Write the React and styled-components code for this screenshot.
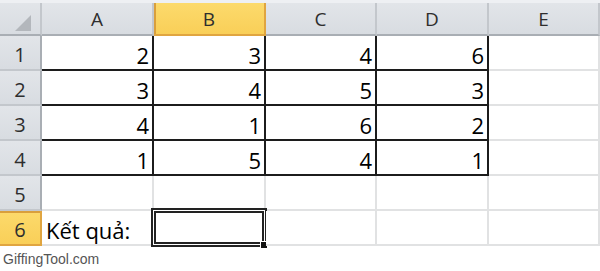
import React from "react";
import styled, { createGlobalStyle, css } from "styled-components";

const Global = createGlobalStyle`
  html, body { margin: 0; padding: 0; background: #fff; }
  body { width: 600px; height: 271px; overflow: hidden; }
`;

const Page = styled.div`
  width: 600px;
  height: 271px;
  background: #fff;
  font-family: "Open Sans", Lato, sans-serif;
`;

const TopStrip = styled.div`
  height: 3px;
  background: #eef0f3;
`;

const Sheet = styled.div`
  display: grid;
  grid-template-columns: 42px 112px 112px 111px 112px 111px;
  grid-template-rows: 33px repeat(6, 35px);
`;

const Head = styled.div`
  box-sizing: border-box;
  display: flex;
  align-items: center;
  justify-content: center;
  font-size: 19px;
  color: #2e2e2e;
  background: linear-gradient(#e2e5e9, #d8dce1);
  border-right: 2px solid #c3c7cc;
  border-bottom: 2px solid #a9aeb4;
  padding-top: 1px;
  ${p => p.$active && css`
    background: linear-gradient(#fcda6c, #f9cf58);
    border-right-color: #e0a540;
    border-bottom-color: #e0a540;
    box-shadow: inset 2px 0 0 #d99f3c;
  `}
`;

const RowHead = styled(Head)`
  border-right: 2px solid #a9aeb4;
  border-bottom: 2px solid #c3c7cc;
  padding-top: 3px;
  font-size: 20px;
  ${p => p.$active && css`
    background: linear-gradient(#fcda6c, #f9cf58);
    border-right-color: #e0a540;
    border-bottom-color: #e0a540;
    box-shadow: inset 0 2px 0 #d99f3c;
  `}
`;

const Corner = styled(Head)`
  border-bottom-color: #a9aeb4;
`;

const Triangle = styled.div`
  width: 0;
  height: 0;
  border-left: 16px solid transparent;
  border-bottom: 16px solid #b3b7bc;
  margin: 8px 0 0 6px;
`;

const Cell = styled.div`
  position: relative;
  box-sizing: border-box;
  display: flex;
  align-items: center;
  justify-content: ${p => (p.$left ? "flex-start" : "flex-end")};
  padding: 4px 3px 0 4px;
  font-size: 22px;
  color: #000;
  background: #fff;
  border-right: 2px solid ${p => (p.$boxR ? "#1c1c1c" : "#e1e2e3")};
  border-bottom: 2px solid ${p => (p.$boxB ? "#1c1c1c" : "#e1e2e3")};
`;

const Selection = styled.div`
  position: absolute;
  left: -3px;
  top: -3px;
  right: -3px;
  bottom: -3px;
  border: 2px solid #222;
  box-shadow: inset 0 0 0 1px #fff, inset 0 0 0 3px #222;
  pointer-events: none;
`;

const Handle = styled.div`
  position: absolute;
  right: -3px;
  bottom: -4px;
  width: 6px;
  height: 6px;
  background: #111;
  border-left: 1px solid #fff;
  border-top: 1px solid #fff;
`;

const Watermark = styled.div`
  padding: 5px 0 0 3px;
  font-family: "Liberation Sans", Arial, sans-serif;
  font-size: 14px;
  color: #555;
`;

const cols = ["A", "B", "C", "D", "E"];
const data = [
  [2, 3, 4, 6],
  [3, 4, 5, 3],
  [4, 1, 6, 2],
  [1, 5, 4, 1],
];

export default function App() {
  const rows = [1, 2, 3, 4, 5, 6];
  return (
    <Page>
      <Global />
      <TopStrip />
      <Sheet>
        <Corner>
          <Triangle />
        </Corner>
        {cols.map(c => (
          <Head key={c} $active={c === "B"}>{c}</Head>
        ))}
        {rows.map(r => (
          <React.Fragment key={r}>
            <RowHead $active={r === 6}>{r}</RowHead>
            {cols.map((c, ci) => {
              const inBox = r <= 4 && ci < 4;
              const value = inBox ? data[r - 1][ci] : "";
              if (r === 6 && ci === 0) {
                return <Cell key={c} $left>Kết quả:</Cell>;
              }
              if (r === 6 && ci === 1) {
                return (
                  <Cell key={c}>
                    <Selection />
                    <Handle />
                  </Cell>
                );
              }
              return (
                <Cell key={c} $boxR={inBox} $boxB={inBox}>
                  {value}
                </Cell>
              );
            })}
          </React.Fragment>
        ))}
      </Sheet>
      <Watermark>GiffingTool.com</Watermark>
    </Page>
  );
}
